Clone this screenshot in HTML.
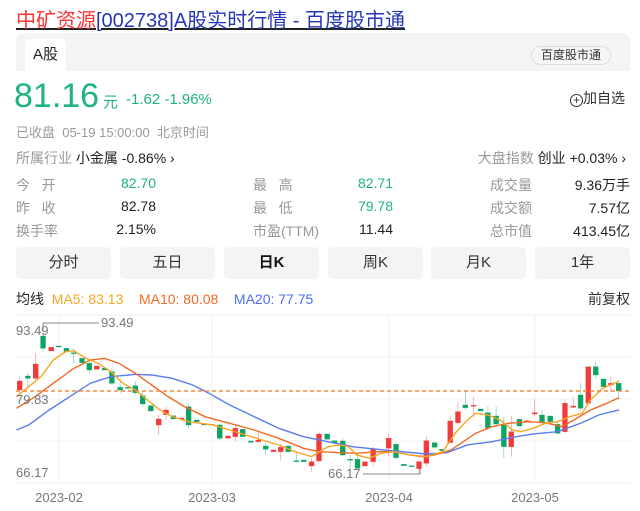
<!DOCTYPE html>
<html><head><meta charset="utf-8"><style>
*{margin:0;padding:0;box-sizing:border-box}
body{width:640px;height:511px;background:#fff;font-family:"Liberation Sans","Noto Sans CJK SC",sans-serif;position:relative;overflow:hidden;color:#222}
.a{position:absolute;white-space:nowrap}
.t{font-size:20px;top:4px;left:16px;text-decoration:underline}
.g{color:#999}
.gr{color:#1fb37f}
.btn{position:absolute;top:247px;height:32px;width:95px;background:#f3f4f6;border-radius:5px;text-align:center;line-height:32px;font-size:15px;color:#333}
.v{font-size:14px}
</style></head><body>
<div class="a t"><span style="color:#f33">中矿资源</span><span style="color:#2337b5">[002738]A股实时行情 - 百度股市通</span></div>
<div class="a" style="left:16px;top:33px;width:614px;height:38px;background:#f3f4f6;border-radius:8px 8px 0 0"></div>
<div class="a" style="left:25px;top:39px;width:41px;height:32px;background:#fff;border-radius:6px 6px 0 0;font-size:15px;line-height:32px;text-align:center">A股</div>
<div class="a" style="left:531px;top:46px;width:80px;height:19px;border:1px solid #ddd;border-radius:10px;font-size:12px;line-height:17px;text-align:center;color:#333;background:#f6f6f6">百度股市通</div>
<div class="a gr" style="left:14px;top:77px;font-size:34px">81.16</div>
<div class="a gr" style="left:103px;top:91px;font-size:15px">元</div>
<div class="a gr" style="left:126px;top:91px;font-size:15px">-1.62 -1.96%</div>
<div class="a" style="left:570px;top:88px;font-size:14px;color:#333"><span style="display:inline-block;width:13px;height:13px;border:1px solid #333;border-radius:50%;font-size:12px;line-height:10px;text-align:center;vertical-align:-1px">+</span>加自选</div>
<div class="a g" style="left:16px;top:122px;font-size:13px">已收盘&nbsp; 05-19 15:00:00&nbsp; 北京时间</div>
<div class="a v" style="left:16px;top:148px"><span class="g">所属行业</span> 小金属 -0.86% ›</div>
<div class="a v" style="right:14px;top:148px"><span class="g">大盘指数</span> 创业 +0.03% ›</div>
<div class="a v g" style="left:16px;top:175px">今&nbsp;&nbsp;&nbsp;开</div>
<div class="a v g" style="left:16px;top:198px">昨&nbsp;&nbsp;&nbsp;收</div>
<div class="a v g" style="left:16px;top:221px">换手率</div>
<div class="a v gr" style="right:484px;top:175px">82.70</div>
<div class="a v" style="right:484px;top:198px">82.78</div>
<div class="a v" style="right:484px;top:221px">2.15%</div>
<div class="a v g" style="left:253px;top:175px">最&nbsp;&nbsp;&nbsp;高</div>
<div class="a v g" style="left:253px;top:198px">最&nbsp;&nbsp;&nbsp;低</div>
<div class="a v g" style="left:253px;top:221px">市盈(TTM)</div>
<div class="a v gr" style="right:247px;top:175px">82.71</div>
<div class="a v gr" style="right:247px;top:198px">79.78</div>
<div class="a v" style="right:247px;top:221px">11.44</div>
<div class="a v g" style="left:490px;top:175px">成交量</div>
<div class="a v g" style="left:490px;top:198px">成交额</div>
<div class="a v g" style="left:490px;top:221px">总市值</div>
<div class="a v" style="right:10px;top:175px">9.36万手</div>
<div class="a v" style="right:10px;top:198px">7.57亿</div>
<div class="a v" style="right:10px;top:221px">413.45亿</div>
<div class="btn" style="left:16px">分时</div>
<div class="btn" style="left:120px">五日</div>
<div class="btn" style="left:224px;font-weight:bold;color:#111">日K</div>
<div class="btn" style="left:328px">周K</div>
<div class="btn" style="left:431px">月K</div>
<div class="btn" style="left:535px">1年</div>
<div class="a v" style="left:16px;top:289px">均线&nbsp; <span style="color:#f5a623">MA5: 83.13</span>&nbsp;&nbsp;&nbsp; <span style="color:#f06a25">MA10: 80.08</span>&nbsp;&nbsp;&nbsp; <span style="color:#4f6ef0">MA20: 77.75</span></div>
<div class="a v" style="right:10px;top:289px;color:#333">前复权</div>
<svg class="a" style="left:0;top:0" width="640" height="511">
<g stroke="#f0f0f0" stroke-width="1">
<line x1="16" x2="630" y1="315" y2="315"/><line x1="16" x2="630" y1="357" y2="357"/><line x1="16" x2="630" y1="399" y2="399"/><line x1="16" x2="630" y1="441" y2="441"/><line x1="16" x2="630" y1="483" y2="483"/>
<line x1="59" x2="59" y1="315" y2="483"/><line x1="212" x2="212" y1="315" y2="483"/><line x1="389" x2="389" y1="315" y2="483"/><line x1="535" x2="535" y1="315" y2="483"/>
</g>
<g transform="translate(0,310) scale(0.41,0.3333)">
<g stroke-width="1" vector-effect="non-scaling-stroke">
<g fill="#f23b3b" stroke="#f23b3b">
<rect x="42" y="213" width="12" height="27"/><rect x="81" y="162" width="12" height="43"/><rect x="119" y="112" width="12" height="11"/><rect x="230" y="168" width="12" height="10"/><rect x="381" y="327" width="12" height="18"/><rect x="399" y="300" width="12" height="14"/><rect x="437" y="324" width="12" height="4"/><rect x="510" y="343" width="12" height="2"/><rect x="550" y="378" width="12" height="7"/><rect x="568" y="355" width="12" height="25"/><rect x="624" y="390" width="12" height="5"/><rect x="661" y="420" width="12" height="5"/><rect x="679" y="412" width="12" height="13"/><rect x="754" y="455" width="12" height="13"/><rect x="772" y="372" width="12" height="81"/><rect x="884" y="455" width="12" height="13"/><rect x="904" y="418" width="12" height="37"/><rect x="942" y="385" width="12" height="30"/><rect x="1016" y="455" width="12" height="21"/><rect x="1034" y="392" width="12" height="68"/><rect x="1092" y="333" width="12" height="65"/><rect x="1111" y="305" width="12" height="33"/><rect x="1149" y="286" width="12" height="3"/><rect x="1241" y="365" width="12" height="45"/><rect x="1279" y="332" width="12" height="3"/><rect x="1298" y="308" width="12" height="4"/><rect x="1372" y="280" width="12" height="85"/><rect x="1392" y="288" width="12" height="4"/><rect x="1429" y="170" width="12" height="110"/><rect x="1484" y="220" width="12" height="5"/>
<line x1="48" x2="48" y1="200" y2="250"/><line x1="87" x2="87" y1="130" y2="210"/><line x1="387" x2="387" y1="315" y2="375"/><line x1="405" x2="405" y1="290" y2="330"/><line x1="574" x2="574" y1="345" y2="395"/><line x1="630" x2="630" y1="365" y2="400"/><line x1="685" x2="685" y1="400" y2="452"/><line x1="760" x2="760" y1="445" y2="485"/><line x1="778" x2="778" y1="365" y2="460"/><line x1="910" x2="910" y1="410" y2="470"/><line x1="948" x2="948" y1="372" y2="440"/><line x1="1022" x2="1022" y1="450" y2="490"/><line x1="1040" x2="1040" y1="378" y2="470"/><line x1="1098" x2="1098" y1="320" y2="400"/><line x1="1117" x2="1117" y1="278" y2="345"/><line x1="1155" x2="1155" y1="262" y2="320"/><line x1="1247" x2="1247" y1="318" y2="440"/><line x1="1304" x2="1304" y1="268" y2="318"/><line x1="1378" x2="1378" y1="268" y2="368"/><line x1="1398" x2="1398" y1="262" y2="295"/><line x1="1490" x2="1490" y1="200" y2="245"/>
</g>
<g fill="#0da463" stroke="#0da463">
<rect x="62" y="198" width="12" height="7"/><rect x="99" y="78" width="12" height="37"/><rect x="137" y="108" width="12" height="3"/><rect x="156" y="115" width="12" height="10"/><rect x="174" y="128" width="12" height="3"/><rect x="194" y="145" width="12" height="13"/><rect x="212" y="160" width="12" height="20"/><rect x="249" y="175" width="12" height="5"/><rect x="267" y="185" width="12" height="35"/><rect x="287" y="232" width="12" height="8"/><rect x="306" y="232" width="12" height="3"/><rect x="324" y="227" width="12" height="21"/><rect x="342" y="257" width="12" height="25"/><rect x="362" y="287" width="12" height="16"/><rect x="417" y="317" width="12" height="10"/><rect x="454" y="290" width="12" height="55"/><rect x="474" y="330" width="12" height="5"/><rect x="492" y="342" width="12" height="3"/><rect x="530" y="345" width="12" height="40"/><rect x="586" y="358" width="12" height="22"/><rect x="606" y="393" width="12" height="4"/><rect x="642" y="408" width="12" height="10"/><rect x="697" y="408" width="12" height="17"/><rect x="717" y="452" width="12" height="3"/><rect x="735" y="450" width="12" height="5"/><rect x="792" y="372" width="12" height="16"/><rect x="810" y="392" width="12" height="8"/><rect x="830" y="393" width="12" height="42"/><rect x="848" y="448" width="12" height="3"/><rect x="866" y="448" width="12" height="27"/><rect x="960" y="403" width="12" height="40"/><rect x="979" y="463" width="12" height="4"/><rect x="998" y="467" width="12" height="3"/><rect x="1054" y="398" width="12" height="14"/><rect x="1072" y="418" width="12" height="4"/><rect x="1129" y="285" width="12" height="8"/><rect x="1166" y="297" width="12" height="6"/><rect x="1184" y="308" width="12" height="47"/><rect x="1204" y="318" width="12" height="24"/><rect x="1223" y="345" width="12" height="65"/><rect x="1261" y="328" width="12" height="20"/><rect x="1316" y="315" width="12" height="20"/><rect x="1336" y="318" width="12" height="17"/><rect x="1354" y="343" width="12" height="27"/><rect x="1410" y="255" width="12" height="40"/><rect x="1447" y="170" width="12" height="25"/><rect x="1466" y="207" width="12" height="23"/><rect x="1503" y="220" width="12" height="23"/>
<line x1="68" x2="68" y1="188" y2="235"/><line x1="105" x2="105" y1="60" y2="125"/><line x1="180" x2="180" y1="115" y2="160"/><line x1="218" x2="218" y1="150" y2="188"/><line x1="273" x2="273" y1="175" y2="225"/><line x1="293" x2="293" y1="205" y2="250"/><line x1="330" x2="330" y1="215" y2="255"/><line x1="348" x2="348" y1="245" y2="290"/><line x1="460" x2="460" y1="280" y2="355"/><line x1="536" x2="536" y1="340" y2="390"/><line x1="648" x2="648" y1="400" y2="435"/><line x1="723" x2="723" y1="425" y2="458"/><line x1="836" x2="836" y1="385" y2="438"/><line x1="854" x2="854" y1="435" y2="480"/><line x1="872" x2="872" y1="430" y2="480"/><line x1="966" x2="966" y1="395" y2="448"/><line x1="1135" x2="1135" y1="240" y2="300"/><line x1="1190" x2="1190" y1="290" y2="360"/><line x1="1210" x2="1210" y1="290" y2="350"/><line x1="1229" x2="1229" y1="320" y2="445"/><line x1="1322" x2="1322" y1="300" y2="345"/><line x1="1360" x2="1360" y1="335" y2="372"/><line x1="1416" x2="1416" y1="218" y2="305"/><line x1="1453" x2="1453" y1="155" y2="205"/><line x1="1509" x2="1509" y1="218" y2="268"/>
</g>
</g>
<g fill="none" stroke-width="1.4" vector-effect="non-scaling-stroke">
<polyline vector-effect="non-scaling-stroke" stroke="#5b7bf0" points="40,360 70,345 120,300 170,260 220,220 270,200 330,193 370,195 420,205 470,225 510,250 560,285 620,320 680,355 740,380 800,395 860,410 920,418 980,425 1040,432 1090,428 1140,405 1200,395 1260,380 1300,372 1360,365 1420,338 1460,315 1510,300"/>
<polyline vector-effect="non-scaling-stroke" stroke="#f06a25" points="40,295 80,265 130,220 180,175 220,150 255,145 290,160 330,190 370,225 410,260 450,290 500,320 560,340 620,360 680,385 740,415 780,425 830,428 870,430 920,425 960,425 1000,435 1030,440 1060,435 1100,420 1130,395 1160,370 1200,350 1240,340 1290,335 1330,338 1370,350 1400,330 1440,300 1480,280 1510,263"/>
<polyline vector-effect="non-scaling-stroke" stroke="#f5a623" points="40,260 100,200 130,150 160,125 180,122 210,145 240,160 270,185 300,220 330,240 360,270 390,300 420,320 460,335 520,345 560,360 600,375 640,390 680,405 720,425 760,440 780,425 800,410 830,405 850,410 870,435 900,445 930,430 960,425 1000,435 1040,440 1080,425 1110,370 1140,330 1160,310 1190,315 1220,330 1250,360 1270,365 1300,355 1330,340 1360,335 1390,320 1420,310 1440,270 1470,235 1510,213"/>
</g>
</g>
<line x1="16" x2="630" y1="391" y2="391" stroke="#f58a3c" stroke-width="1.5" stroke-dasharray="4,3"/>
<polyline points="43,330 43,323 99,323" fill="none" stroke="#888" stroke-width="1"/>
<polyline points="363,474 420,474 420,468" fill="none" stroke="#888" stroke-width="1"/>
<g font-family="Liberation Sans, sans-serif" font-size="13" fill="#777">
<text x="16" y="335">93.49</text><text x="101" y="327">93.49</text>
<text x="16" y="404">79.83</text>
<text x="16" y="477">66.17</text><text x="328" y="478">66.17</text>
<text x="59" y="502" text-anchor="middle">2023-02</text><text x="212" y="502" text-anchor="middle">2023-03</text><text x="389" y="502" text-anchor="middle">2023-04</text><text x="535" y="502" text-anchor="middle">2023-05</text>
</g>
</svg>
</body></html>
